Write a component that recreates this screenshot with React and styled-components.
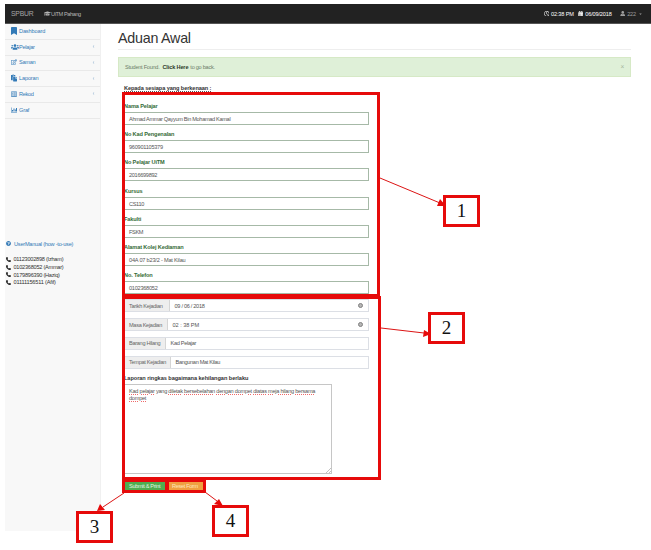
import React from "react";
import styled, { createGlobalStyle } from "styled-components";
import {
  FaGraduationCap, FaBookmark, FaUsers, FaRegEdit, FaPaste, FaRegListAlt,
  FaQuestionCircle, FaPhoneAlt, FaRegClock, FaCalendarAlt, FaUser, FaCaretDown, FaChevronLeft,
} from "react-icons/fa";

const Global = createGlobalStyle`
  * { box-sizing: border-box; }
  body { margin: 0; background: #fff; }
`;

const Page = styled.div`
  position: relative;
  width: 651px;
  height: 550px;
  padding: 4px 0 0 5px;
  overflow: hidden;
  background: #fff;
  color: #444;
  font-family: "Liberation Sans", Arial, sans-serif;
  font-size: 5.6px;
  line-height: 8px;
  white-space: nowrap;
`;

const TopBar = styled.header`
  display: flex;
  align-items: center;
  height: 20px;
  padding: 0 9px 0 6px;
  background: #222;
  border-bottom: 1px solid #555;
  color: #9d9d9d;
`;
const Brand = styled.span`
  width: 33px;
  font-size: 6.8px;
  letter-spacing: -0.2px;
  color: #a6a6a6;
`;
const Campus = styled.span`
  display: flex;
  align-items: center;
  flex: 1;
  letter-spacing: -0.4px;
  color: #b5b5b5;
  svg { width: 7px; height: 7px; }
`;
const Status = styled.span`
  display: flex;
  align-items: center;
  gap: 2px;
  margin-right: ${(p) => p.$gap}px;
  color: ${(p) => p.$color || "#fff"};
  letter-spacing: -0.16px;
  svg { width: 5.5px; height: 5.5px; }
`;
const Caret = styled(FaCaretDown)`
  && { width: 3px; height: 4px; margin-left: 1px; }
`;

const Body = styled.div`
  display: flex;
  height: 507px;
`;
const Sidebar = styled.aside`
  width: 96px;
  flex: none;
  background: #f8f8f8;
  border-right: 1px solid #f0f0f0;
`;
const NavItem = styled.div`
  display: flex;
  align-items: center;
  gap: 2px;
  height: 15.75px;
  padding: 0 5px 1px 6px;
  border-bottom: 1px solid #e9e9e9;
  color: #337ab7;
  letter-spacing: ${(p) => p.$spacing}px;
  > svg:first-child {
    width: ${(p) => (p.$wide ? 8 : 6)}px;
    height: 8px;
    margin-right: ${(p) => (p.$wide ? -2 : 0)}px;
  }
`;
const Arrow = styled(FaChevronLeft)`
  width: 3px;
  height: 3px;
  margin-left: auto;
  color: #8eb0cf;
`;
const Manual = styled.div`
  display: flex;
  align-items: center;
  gap: 3px;
  margin-top: 121px;
  padding-left: 1px;
  color: #337ab7;
  letter-spacing: -0.23px;
  svg { width: 5px; height: 5px; }
`;
const Contacts = styled.div`
  margin-top: 8px;
  padding-left: 1px;
  color: #333;
`;
const Contact = styled.div`
  display: flex;
  align-items: center;
  gap: 2.5px;
  height: 7.7px;
  letter-spacing: ${(p) => p.$spacing}px;
`;
const Handset = styled.svg`
  width: 5px;
  height: 5px;
  fill: #222;
`;

const Main = styled.main`
  width: 530px;
  padding: 0 0 0 17px;
`;
const Heading = styled.h1`
  width: 513px;
  height: 26px;
  margin: 0 0 7px;
  padding-top: 5px;
  border-bottom: 1px solid #eee;
  color: #333;
  font-size: 14.3px;
  line-height: 18px;
  font-weight: 400;
  letter-spacing: -0.25px;
`;
const Alert = styled.div`
  display: flex;
  align-items: center;
  width: 513px;
  height: 20px;
  padding: 0 6px;
  background: #dff0d8;
  border: 1px solid #d6e9c6;
  color: #6e7d6a;
  letter-spacing: -0.27px;
  b { color: #2f3a2c; letter-spacing: -0.15px; margin: 0 2px 0 3px; }
`;
const Close = styled.span`
  margin-left: auto;
  color: #a5b5a0;
  font-size: 6.5px;
`;
const Form = styled.form`
  width: 251px;
  padding: 7px 0 0 6px;
`;
const Intro = styled.div`
  width: max-content;
  height: 8px;
  border-bottom: 1px dotted #555;
  color: #333;
  font-weight: 700;
  letter-spacing: -0.08px;
`;
const Field = styled.div`
  height: 28.2px;
`;
const FieldLabel = styled.label`
  display: block;
  height: 10.1px;
  color: #356b37;
  font-weight: 700;
  letter-spacing: -0.13px;
`;
const FieldInput = styled.div`
  height: 13px;
  padding: 2px 4px;
  border: 1px solid #a6b9a7;
  color: #555;
  letter-spacing: ${(p) => p.$spacing}px;
`;
const FieldList = styled.div`
  margin-top: 10px;
`;
const Group = styled.div`
  display: flex;
  height: 13px;
  margin-bottom: 5.8px;
  border: 1px solid #dcdfe5;
`;
const Addon = styled.span`
  width: ${(p) => p.$width}px;
  padding: 1.5px 4px;
  background: #eee;
  border-right: 1px solid #d5d5d5;
  color: #666;
  letter-spacing: -0.31px;
`;
const Value = styled.span`
  flex: 1;
  padding: 1.5px 4.5px;
  color: #555;
  letter-spacing: ${(p) => p.$spacing}px;
`;
const Clear = styled.span`
  width: 5px;
  height: 5px;
  margin: 3px 5.5px 0 0;
  border: 1.5px solid #808080;
  border-radius: 50%;
  background: #b5b5b5;
`;
const ReportLabel = styled.label`
  display: block;
  height: 10px;
  margin-top: -1px;
  color: #333;
  font-weight: 700;
  letter-spacing: -0.05px;
`;
const Report = styled.div`
  position: relative;
  width: 208px;
  height: 90px;
  padding: 3px 4px;
  border: 1px solid #c6c6c6;
  color: #555;
  line-height: 7.8px;
  letter-spacing: -0.25px;
`;
const Misspelt = styled.span`
  text-decoration: underline dotted #ee6a6a 1px;
  text-underline-offset: 0.5px;
`;
const Grip = styled.svg`
  position: absolute;
  right: 0;
  bottom: 0;
  width: 5px;
  height: 5px;
`;
const Actions = styled.div`
  display: flex;
  gap: 4px;
  margin-top: 8px;
  padding-left: 1px;
`;
const Button = styled.span`
  width: ${(p) => p.$width}px;
  height: 9px;
  padding-left: ${(p) => p.$pad}px;
  background: ${(p) => p.$color};
  color: ${(p) => p.$ink};
  line-height: 9px;
  letter-spacing: -0.33px;
`;

const Frame = styled.div`
  position: absolute;
  left: ${(p) => p.$x}px;
  top: ${(p) => p.$y}px;
  width: ${(p) => p.$w}px;
  height: ${(p) => p.$h}px;
  border: 3px solid #e60a0a;
`;
const Callout = styled(Frame)`
  display: flex;
  align-items: center;
  justify-content: center;
  padding-bottom: 1px;
  background: #fff;
  color: #111;
  font: 19px/26px "Liberation Serif", serif;
`;
const Arrows = styled.svg`
  position: absolute;
  inset: 0;
`;

const BarChart = () => (
  <svg viewBox="0 0 12 14" fill="currentColor">
    <path d="M0 2h1v9h11v1H0zM2 7h2v3H2zM5 4h2v6H5zM8 6h1.500v4H8zM10 3h2v7h-2z" />
  </svg>
);

const nav = [
  [FaBookmark, "Dashboard", false, -0.14],
  [FaUsers, "Pelajar", true, -0.25],
  [FaRegEdit, "Saman", true, -0.25],
  [FaPaste, "Laporan", true, -0.15],
  [FaRegListAlt, "Rekod", true, -0.3],
  [BarChart, "Graf", false, -0.15],
];
const contacts = [
  ["01123002898 (Izham)", -0.24],
  ["0102368052 (Ammar)", -0.25],
  ["0179896390 (Haziq)", -0.25],
  ["01111156511 (Afif)", -0.18],
];
const fields = [
  ["Nama Pelajar", "Ahmad Ammar Qayyum Bin Mohamad Kamal", -0.32],
  ["No Kad Pengenalan", "960901105379", -0.26],
  ["No Pelajar UiTM", "2016699892", -0.3],
  ["Kursus", "CS110", -0.35],
  ["Fakulti", "FSKM", -0.35],
  ["Alamat Kolej Kediaman", "04A 07 b23/2 - Mat Kilau", -0.2],
  ["No. Telefon", "0102368052", -0.26],
];
const groups = [
  ["Tarikh Kejadian", "09 / 06 / 2018", 45, true, -0.3],
  ["Masa Kejadian", "02 : 38  PM", 43, true, -0.05],
  ["Barang Hilang", "Kad Pelajar", 41, false, -0.3],
  ["Tempat Kejadian", "Bangunan Mat Kilau", 46, false, -0.32],
];
const report = "Kad pelajar yang diletak bersebelahan dengan dompet diatas meja hilang bersama dompet";

export default function App() {
  return (
    <Page>
      <Global />
      <TopBar>
        <Brand>SPBUR</Brand>
        <Campus><FaGraduationCap />UiTM Pahang</Campus>
        <Status $gap={4}><FaRegClock />02:38 PM</Status>
        <Status $gap={8}><FaCalendarAlt />06/09/2018</Status>
        <Status $gap={0} $color="#9d9d9d"><FaUser />222<Caret /></Status>
      </TopBar>
      <Body>
        <Sidebar>
          {nav.map(([Icon, name, more, spacing]) => (
            <NavItem key={name} $spacing={spacing} $wide={Icon === FaUsers}>
              <Icon />{name}{more && <Arrow />}
            </NavItem>
          ))}
          <Manual><FaQuestionCircle />UserManual (how -to-use)</Manual>
          <Contacts>
            {contacts.map(([text, spacing]) => (
              <Contact key={text} $spacing={spacing}>
                <Handset viewBox="0 0 10 10">
                  <path d="M0 2Q0 0 3 0L4 3 3 4Q4 6 6 7L7 6 10 7Q10 10 8 10Q5 10 2 7Q0 5 0 2Z" />
                </Handset>
                {text}
              </Contact>
            ))}
          </Contacts>
        </Sidebar>
        <Main>
          <Heading>Aduan Awal</Heading>
          <Alert>Student Found. <b>Click Here</b> to go back.<Close>×</Close></Alert>
          <Form>
            <Intro>Kepada sesiapa yang berkenaan :</Intro>
            <FieldList>
              {fields.map(([label, value, spacing]) => (
                <Field key={label}>
                  <FieldLabel>{label}</FieldLabel>
                  <FieldInput $spacing={spacing}>{value}</FieldInput>
                </Field>
              ))}
            </FieldList>
            {groups.map(([label, value, width, clear, spacing]) => (
              <Group key={label}>
                <Addon $width={width}>{label}</Addon>
                <Value $spacing={spacing}>{value}</Value>
                {clear && <Clear />}
              </Group>
            ))}
            <ReportLabel>Laporan ringkas bagaimana kehilangan berlaku</ReportLabel>
            <Report>
              {report.split(" ").map((word, i) => (
                <React.Fragment key={i}>
                  {i === 11 && <br />}
                  {word === "yang" ? word : <Misspelt>{word}</Misspelt>}{" "}
                </React.Fragment>
              ))}
              <Grip viewBox="0 0 5 5"><path d="M0 5 5 0M3 5 5 3" stroke="#999" strokeWidth=".6" /></Grip>
            </Report>
            <Actions>
              <Button $width={40} $pad={4} $color="#4fae50" $ink="#e4f5e0">Submit &amp; Print</Button>
              <Button $width={34} $pad={3} $color="#f0a040" $ink="#fde6bd">Reset Form</Button>
            </Actions>
          </Form>
        </Main>
      </Body>
      <Frame $x={122} $y={92} $w={258} $h={205} />
      <Frame $x={122} $y={296} $w={259} $h={184} />
      <Frame $x={122} $y={479} $w={46} $h={14} />
      <Frame $x={166} $y={479} $w={40} $h={14} />
      <Arrows width="651" height="550" stroke="#dc1414" fill="#e60a0a">
        <path d="M380 178 440 203M381 328 424 333M124 493 103 507M205 492 217 501" />
        <path d="M446 206 437 206 440 199ZM431 334 423 337 424 330ZM97 511 100 504 105 510ZM223 506 214 504 219 499Z" stroke="none" />
      </Arrows>
      <Callout $x={443} $y={195} $w={37} $h={32}>1</Callout>
      <Callout $x={428} $y={312} $w={37} $h={32}>2</Callout>
      <Callout $x={76} $y={511} $w={37} $h={32}>3</Callout>
      <Callout $x={212} $y={505} $w={37} $h={32}>4</Callout>
    </Page>
  );
}
